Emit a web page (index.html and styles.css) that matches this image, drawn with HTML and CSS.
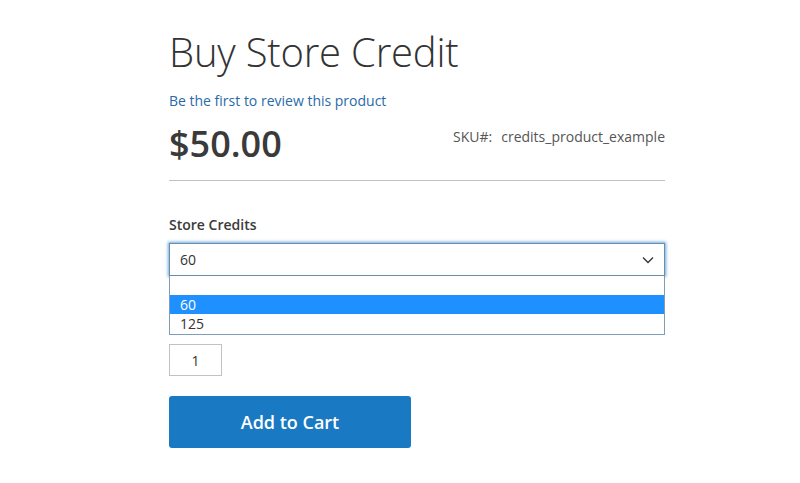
FILE: index.html
```html
<!DOCTYPE html>
<html lang="en">
<head>
    <meta charset="UTF-8">
    <meta name="viewport" content="width=device-width, initial-scale=1.0">
    <title>Buy Store Credit</title>

    <link rel="stylesheet" href="styles.css">
</head>
<body>
    <div class="product-main">
        <h1 class="page-title">Buy Store Credit</h1>
        <a class="review-link" href="#">Be the first to review this product</a>

        <div class="price-row">
            <span class="price">$50.00</span>
            <span class="sku"><span class="sku-label">SKU#:</span>credits_product_example</span>
        </div>

        <div class="options">
            <p class="field-label">Store Credits</p>
            <div class="select-wrap">
                <div class="select-box">
                    <span>60</span>
                    <svg class="chevron" width="12" height="8" viewBox="0 0 12 8"><path d="M1 1.5l5 5 5-5" fill="none" stroke="#333" stroke-width="1.3"/></svg>
                </div>
                <ul class="select-list">
                    <li class="option">&nbsp;</li>
                    <li class="option selected">60</li>
                    <li class="option">125</li>
                </ul>
            </div>

            <input class="qty" type="text" value="1">

            <button class="add-to-cart">Add to Cart</button>
        </div>
    </div>
</body>
</html>
```

FILE: styles.css
```css
body{
    margin: 0;
    background-color: #fff;
    color: #333;
    font-family: "Open Sans", Arial, sans-serif;
    font-size: 14px;
}
.product-main{
    width: 496px;
    margin-left: 169px;
    padding-top: 30px;
}
.page-title{
    font-size: 40px;
    font-weight: 300;
    line-height: 1.1;
    letter-spacing: -0.2px;
    margin: 0 0 17px;
}
.review-link{
    display: block;
    color: #2a6aa8;
    text-decoration: none;
    line-height: 20px;
}
.price-row{
    display: flex;
    justify-content: space-between;
    align-items: flex-start;
    padding: 13px 0 16px;
    border-bottom: 1px solid #c1c1c1;
}
.price{
    font-size: 36px;
    font-weight: 600;
    line-height: 40px;
    color: #3a3a3a;
}
.sku{
    color: #555;
    line-height: 20px;
    margin-top: 3px;
}
.sku-label{
    margin-right: 9px;
}
.options{
    padding-top: 34px;
}
.field-label{
    font-weight: 600;
    color: #3a3a3a;
    margin: 0 0 8px;
    line-height: 20px;
}
.select-wrap{
    position: relative;
}
.select-box{
    height: 31px;
    border: 1px solid #6d8ca8;
    box-shadow: 0 0 3px 1px #68a8e0;
    display: flex;
    align-items: center;
    justify-content: space-between;
    padding: 0 10px;
}
.select-list{
    position: absolute;
    left: 0;
    right: 0;
    top: 33px;
    margin: 0;
    padding: 0 0 1px;
    list-style: none;
    background: #fff;
    border: 1px solid #7f9db9;
    border-top: none;
    z-index: 2;
}
.option{
    height: 19px;
    line-height: 19px;
    padding-left: 10px;
}
.selected{
    background: #1e90ff;
    color: #fff;
}
.qty{
    display: block;
    margin-top: 68px;
    width: 53px;
    height: 32px;
    box-sizing: border-box;
    border: 1px solid #c2c2c2;
    text-align: center;
    font-family: "Open Sans", Arial, sans-serif;
    font-size: 14px;
    color: #333;
    padding: 0;
}
.add-to-cart{
    display: block;
    margin-top: 20px;
    width: 242px;
    height: 52px;
    background: #1979c3;
    border: none;
    border-radius: 3px;
    color: #fff;
    font-family: "Open Sans", Arial, sans-serif;
    font-size: 18px;
    font-weight: 600;
    cursor: pointer;
}
```
